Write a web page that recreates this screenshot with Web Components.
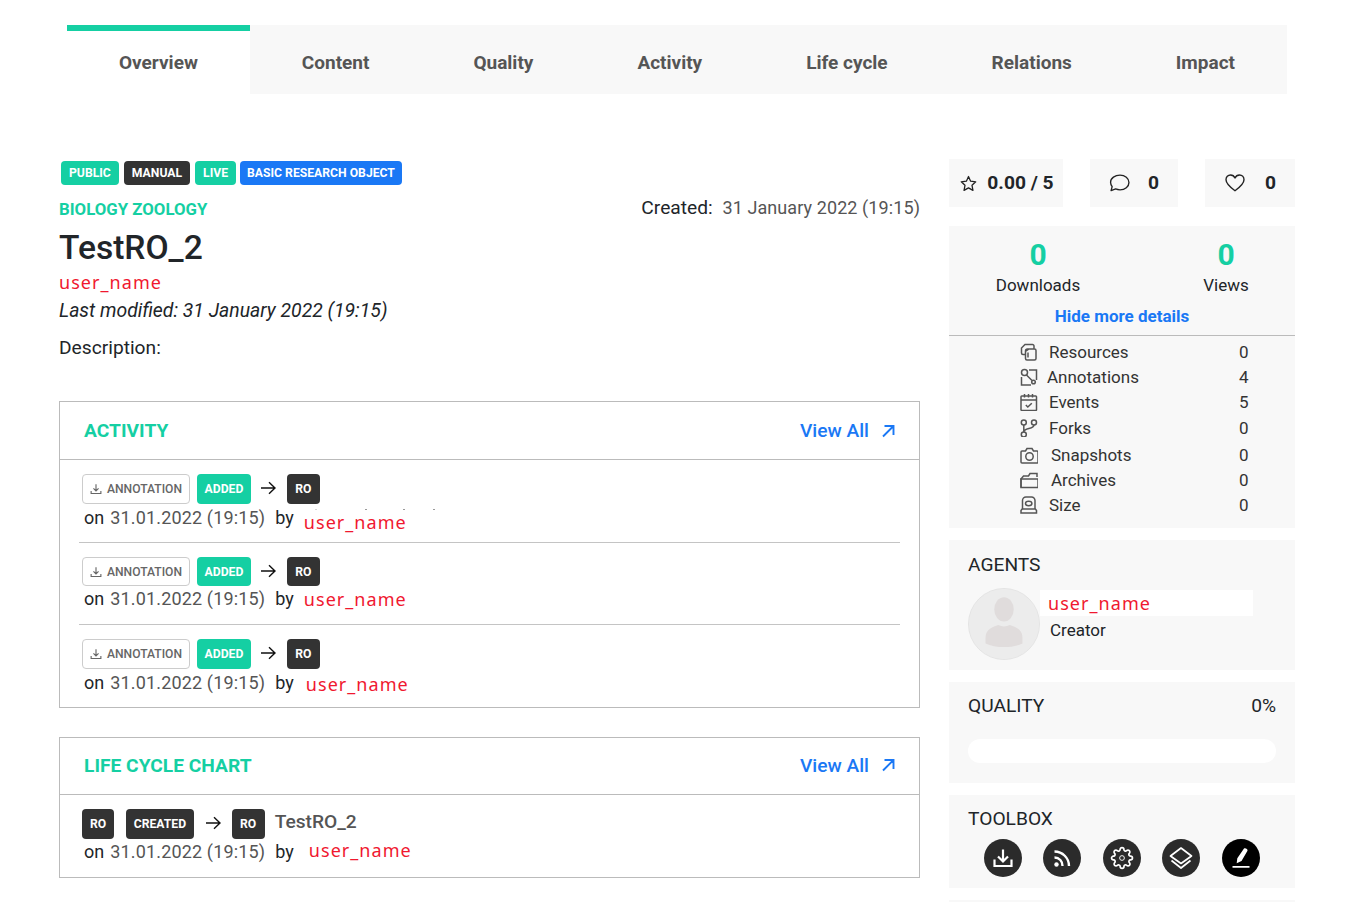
<!DOCTYPE html>
<html lang="en">
<head>
<meta charset="utf-8">
<title>TestRO_2</title>
<style>
  html, body { margin: 0; height: 902px; overflow: hidden; background: #fff; }
  body { font-family: Roboto, "Liberation Sans", sans-serif; color: #212529; }
  ro-page { height: 902px; }
</style>
</head>
<body>
<ro-page>
  <ro-tabs slot="tabs" items="Overview,Content,Quality,Activity,Life cycle,Relations,Impact"></ro-tabs>

  <ro-header slot="main"></ro-header>

  <ro-panel slot="main" heading="ACTIVITY" head-height="57">
    <activity-row name-shift="5" dots><ro-badge kind="outline"><svg slot="icon" width="12" height="12" viewBox="0 0 16 16" fill="none" stroke="#666" stroke-width="1.5"><path d="M8 1.500v9M4.600 7.200 8 10.600l3.400-3.400M1.500 10.500v3.500h13v-3.500"/></svg>ANNOTATION</ro-badge><ro-badge kind="green" style="padding:0 7.500px">ADDED</ro-badge><ro-arrow></ro-arrow><ro-badge kind="dark" style="min-width:33px">RO</ro-badge></activity-row>
    <activity-row divider name-shift="1" style="--chip-h:29px;--line-top:0px"><ro-badge kind="outline"><svg slot="icon" width="12" height="12" viewBox="0 0 16 16" fill="none" stroke="#666" stroke-width="1.5"><path d="M8 1.500v9M4.600 7.200 8 10.600l3.400-3.400M1.500 10.500v3.500h13v-3.500"/></svg>ANNOTATION</ro-badge><ro-badge kind="green" style="padding:0 7.500px">ADDED</ro-badge><ro-arrow></ro-arrow><ro-badge kind="dark" style="min-width:33px">RO</ro-badge></activity-row>
    <activity-row divider name-shift="2" name-left="2" style="height:83px"><ro-badge kind="outline"><svg slot="icon" width="12" height="12" viewBox="0 0 16 16" fill="none" stroke="#666" stroke-width="1.5"><path d="M8 1.500v9M4.600 7.200 8 10.600l3.400-3.400M1.500 10.500v3.500h13v-3.500"/></svg>ANNOTATION</ro-badge><ro-badge kind="green" style="padding:0 7.500px">ADDED</ro-badge><ro-arrow></ro-arrow><ro-badge kind="dark" style="min-width:33px">RO</ro-badge></activity-row>
  </ro-panel>

  <ro-panel slot="main" heading="LIFE CYCLE CHART" head-height="56" gap="29" style="--lift:2px">
    <activity-row name-shift="-1" name-left="5" style="--line-top:0px"><ro-badge kind="dark">RO</ro-badge><ro-badge kind="dark" style="margin-left:5px;padding:0 7.500px">CREATED</ro-badge><ro-arrow style="margin-left:4px"></ro-arrow><ro-badge kind="dark" style="min-width:33px">RO</ro-badge><ro-title>TestRO_2</ro-title></activity-row>
  </ro-panel>

  <stat-chips slot="side"></stat-chips>

  <side-card slot="side" top="19" height="302">
    <ro-counters></ro-counters>
    <detail-row label="Resources" value="0" icon="resources" style="margin-top:3px"></detail-row>
    <detail-row label="Annotations" value="4" left="-2" icon="annotations"></detail-row>
    <detail-row label="Events" value="5" icon="events"></detail-row>
    <detail-row label="Forks" value="0" icon="forks"></detail-row>
    <detail-row label="Snapshots" value="0" left="2" icon="snapshots" style="margin-top:2px"></detail-row>
    <detail-row label="Archives" value="0" left="2" icon="archives"></detail-row>
    <detail-row label="Size" value="0" icon="size"></detail-row>
  </side-card>

  <side-card slot="side" top="12" height="130" heading="AGENTS"><agent-item></agent-item></side-card>
  <side-card slot="side" top="12" height="101" heading="QUALITY" aside="0%" style="--head-top:12px;--body-top:1px"><quality-bar></quality-bar></side-card>
  <side-card slot="side" top="12" height="93" heading="TOOLBOX" style="--head-top:12px;--body-top:1px"><tool-box></tool-box></side-card>
  <side-card slot="side" top="12" height="2"></side-card>
</ro-page>

<script>
const GREEN = '#15cfa3';
const RED = '#f0182f';
const BLUE = '#1a78f5';

// shared small helper so every class sets up its shadow root the same way
class Base extends HTMLElement {
  constructor() {
    super();
    this.attachShadow({ mode: 'open' });
  }
}

class RoPage extends Base {
  connectedCallback() {
    this.shadowRoot.innerHTML = `
      <style>
        :host { display: block; }
        .tabs { margin: 25px 70px 0 67px; }
        .grid { display: grid; grid-template-columns: 861px 346px; column-gap: 29px; margin: 65px 0 0 59px; }
        .col { display: flex; flex-direction: column; min-width: 0; }
      </style>
      <div class="tabs"><slot name="tabs"></slot></div>
      <div class="grid">
        <div class="col"><slot name="main"></slot></div>
        <div class="col"><slot name="side"></slot></div>
      </div>`;
  }
}

class RoTabs extends Base {
  connectedCallback() {
    const items = this.getAttribute('items').split(',');
    this.shadowRoot.innerHTML = `
      <style>
        :host { display: flex; background: #f8f8f8; height: 69px; justify-content: space-between; }
        .tab { box-sizing: border-box; padding: 6px 52px 0; height: 69px; display: flex; align-items: center;
               font: 700 19px Roboto, sans-serif; color: #555; white-space: nowrap; }
        .tab.active { background: #fff; border-top: 6px solid ${GREEN}; padding-top: 0; }
      </style>
      ${items.map((t, i) => `<div class="tab ${i === 0 ? 'active' : ''}">${t}</div>`).join('')}`;
  }
}

class RoBadge extends Base {
  connectedCallback() {
    this.shadowRoot.innerHTML = `
      <style>
        :host { display: inline-flex; align-items: center; justify-content: center; box-sizing: border-box; height: var(--chip-h, 30px);
                padding: 0 8px; border-radius: 4px; font: 700 12.200px Roboto, sans-serif; color: #fff; white-space: nowrap; gap: 4px; }
        :host([kind=green]) { background: ${GREEN}; }
        :host([kind=dark]) { background: #333; }
        :host([kind=blue]) { background: ${BLUE}; }
        :host([kind=outline]) { background: #fff; border: 1px solid #ccc; color: #666; font-weight: 500; font-size: 12.100px; padding: 0 7px; gap: 5px; }
      </style>
      <slot name="icon"></slot><slot></slot>`;
  }
}

class UserName extends Base {
  connectedCallback() {
    this.shadowRoot.innerHTML = `
      <style>
        :host { display: inline-block; font: 400 18px/24px "Noto Sans", sans-serif; letter-spacing: 1.050px; color: ${RED}; white-space: nowrap; }
      </style>user_name`;
  }
}

class RoArrow extends Base {
  connectedCallback() {
    this.shadowRoot.innerHTML = `
      <style>:host { display: inline-flex; align-items: center; margin: -2px 4px 0 2px; }</style>
      <svg width="16" height="14" viewBox="0 0 16 14" fill="none" stroke="#111" stroke-width="1.4"><path d="M1 7h14M9 1.200 15 7l-6 5.800"/></svg>`;
  }
}

class RoTitle extends Base {
  connectedCallback() {
    this.shadowRoot.innerHTML = `
      <style>:host { display: inline-block; font: 500 19.200px/24px Roboto, sans-serif; color: #555; margin: -5px 0 0 3px; }</style>
      <slot></slot>`;
  }
}

class RoHeader extends Base {
  connectedCallback() {
    this.shadowRoot.innerHTML = `
      <style>
        :host { display: block; height: 242px; font-family: Roboto, sans-serif; }
        .badges { display: flex; gap: 5px; margin-left: 2px; height: 24px; margin-top: 2px; --chip-h: 24px; }
        .row { display: flex; justify-content: space-between; align-items: flex-start; margin-top: 13px; }
        .cat { font: 700 16.800px/23px Roboto, sans-serif; color: ${GREEN}; }
        .created { font-size: 19.200px; line-height: 22px; margin-top: -1px; }
        .created span { color: #555; font-size: 18px; margin-left: 5px; letter-spacing: .09px; }
        h1 { font: 500 33.600px/40px Roboto, sans-serif; margin: 7px 0 0; }
        user-name { display: block; margin-top: 2px; }
        .mod { font: italic 400 19.400px/24px Roboto, sans-serif; margin-top: 5px; }
        .desc { font: 400 19.200px/24px Roboto, sans-serif; margin-top: 13px; }
      </style>
      <div class="badges">
        <ro-badge kind="green">PUBLIC</ro-badge><ro-badge kind="dark">MANUAL</ro-badge><ro-badge kind="green">LIVE</ro-badge><ro-badge kind="blue" style="margin-left:-1px;padding:0 7px">BASIC RESEARCH OBJECT</ro-badge>
      </div>
      <div class="row">
        <div class="cat">BIOLOGY ZOOLOGY</div>
        <div class="created">Created: <span>31 January 2022 (19:15)</span></div>
      </div>
      <h1>TestRO_2</h1>
      <user-name></user-name>
      <div class="mod">Last modified: 31 January 2022 (19:15)</div>
      <div class="desc">Description:</div>`;
  }
}

class RoPanel extends Base {
  connectedCallback() {
    const gap = this.getAttribute('gap') || 0;
    const head = this.getAttribute('head-height');
    this.shadowRoot.innerHTML = `
      <style>
        :host { display: block; border: 1px solid #bbb; margin-top: ${gap}px; }
        .head { display: flex; justify-content: space-between; align-items: center; height: ${head}px; padding: 0 24px;
                border-bottom: 1px solid #bbb; }
        .title { font: 700 19.200px Roboto, sans-serif; color: ${GREEN}; margin-bottom: var(--lift, 0); }
        .link { display: flex; align-items: center; gap: 12px; font: 500 19.200px Roboto, sans-serif; color: ${BLUE}; margin-bottom: var(--lift, 0); }
      </style>
      <div class="head">
        <div class="title">${this.getAttribute('heading')}</div>
        <div class="link">View All
          <svg width="14" height="14" viewBox="0 0 14 14" fill="none" stroke="${BLUE}" stroke-width="1.900"><path d="M2 12.500 12 2.500M3.500 2h9v9"/></svg>
        </div>
      </div>
      <slot></slot>`;
  }
}

class ActivityRow extends Base {
  connectedCallback() {
    const shift = Number(this.getAttribute('name-shift') || 0);
    const left = Number(this.getAttribute('name-left') || 0);
    const dots = this.hasAttribute('dots')
      ? `<div class="dots"><i style="left:233px;opacity:.4"></i><i style="left:283px"></i><i style="left:321px"></i><i style="left:351px"></i></div>` : '';
    this.shadowRoot.innerHTML = `
      <style>
        :host { display: block; position: relative; box-sizing: border-box; height: 82px; padding: 14px 20px 0 22px; }
        :host([divider]) { padding-top: 15px; }
        :host([divider])::before { content: ""; position: absolute; left: 19px; right: 19px; top: 0; height: 1px; background: #c4c4c4; }
        .chips { display: flex; align-items: center; gap: 7px; height: var(--chip-h, 30px); }
        .line { display: flex; align-items: baseline; margin: var(--line-top, 1px) 0 0 2px; font: 400 18px/24px Roboto, sans-serif; }
        .date { color: #555; letter-spacing: .16px; margin-left: 6px; }
        .by { margin-left: 10px; }
        user-name { margin-left: ${10 + left}px; position: relative; top: ${shift}px; }
        .dots { position: relative; }
        .dots i { position: absolute; top: 5px; width: 2px; height: 1px; background: #9a9a9a; }
      </style>
      <div class="chips"><slot></slot></div>
      ${dots}
      <div class="line"><span>on</span><span class="date">31.01.2022 (19:15)</span><span class="by">by</span><user-name></user-name></div>`;
  }
}

class StatChips extends Base {
  connectedCallback() {
    const star = `<svg width="17" height="17" viewBox="0 0 16 16" fill="none" stroke="#222" stroke-width="1.200" stroke-linejoin="round"><path d="M8 1.400l2 4.400 4.800.6-3.500 3.300.9 4.800L8 12.100l-4.200 2.400.9-4.800L1.200 6.400l4.800-.6z"/></svg>`;
    const bubble = `<svg width="21" height="18" viewBox="0 0 20 17" fill="none" stroke="#222" stroke-width="1.300" stroke-linejoin="round"><path d="M10.500 1C5.800 1 1.500 3.700 1.500 7.800c0 1.900 1 3.500 1.500 4.200L2 15.800l4.300-1.600c1.300.5 2.700.8 4.200.8 4.700 0 8.500-3.100 8.500-7S15.200 1 10.500 1z"/></svg>`;
    const heart = `<svg width="20" height="18" viewBox="0 0 20 18" fill="none" stroke="#222" stroke-width="1.400" stroke-linejoin="round"><path d="M10 16.800C4 12.400 1 9.200 1 5.800 1 3 3 1 5.500 1 7.500 1 9.200 2.200 10 4c.8-1.800 2.500-3 4.500-3C17 1 19 3 19 5.800c0 3.400-3 6.600-9 11z"/></svg>`;
    this.shadowRoot.innerHTML = `
      <style>
        :host { display: flex; justify-content: space-between; height: 48px; margin-top: 0; }
        .chip { display: flex; align-items: center; justify-content: center; background: #f8f8f8; height: 48px;
                font: 700 19.200px Roboto, sans-serif; color: #212529; }
        .chip span { margin-top: -2px; }
      </style>
      <div class="chip" style="width:114px;gap:10px;padding-left:2px;box-sizing:border-box">${star}<span>0.00 / 5</span></div>
      <div class="chip" style="width:88px;gap:18px">${bubble}<span>0</span></div>
      <div class="chip" style="width:90px;gap:20px;padding-left:1px;box-sizing:border-box">${heart}<span>0</span></div>`;
  }
}

class SideCard extends Base {
  connectedCallback() {
    const heading = this.getAttribute('heading');
    const aside = this.getAttribute('aside');
    this.shadowRoot.innerHTML = `
      <style>
        :host { display: block; box-sizing: border-box; background: #f8f8f8; margin-top: ${this.getAttribute('top')}px; height: ${this.getAttribute('height')}px; flex: none; }
        .h { display: flex; justify-content: space-between; padding: var(--head-top, 13px) 19px var(--body-top, 0); font: 400 19.200px/24px Roboto, sans-serif; color: #212529; }
      </style>
      ${heading ? `<div class="h"><span>${heading}</span><span>${aside || ''}</span></div>` : ''}
      <slot></slot>`;
  }
}

class RoCounters extends Base {
  connectedCallback() {
    this.shadowRoot.innerHTML = `
      <style>
        :host { display: block; box-sizing: border-box; height: 110px; border-bottom: 1px solid #bbb; text-align: center; font: 400 17px/24px Roboto, sans-serif; }
        .two { display: grid; grid-template-columns: 178px 178px; column-gap: 10px; padding-top: 11px; }
        .num { font: 700 30px/36px Roboto, sans-serif; color: ${GREEN}; }
        .more { font: 700 17px/24px Roboto, sans-serif; color: ${BLUE}; margin-top: 7px; width: 346px; }
      </style>
      <div class="two">
        <div><div class="num">0</div><div>Downloads</div></div>
        <div><div class="num">0</div><div>Views</div></div>
      </div>
      <div class="more">Hide more details</div>`;
  }
}

const DETAIL_ICONS = {
  resources: `<path d="M5.500 8A2 2 0 0 1 7.500 6h7A1.500 1.500 0 0 1 16 7.500v8A1.500 1.500 0 0 1 14.500 17h-7.500A1.500 1.500 0 0 1 5.500 15.500zM5.500 11.500H3A1.500 1.500 0 0 1 1.500 10V5L5 1.500h7.500A1.500 1.500 0 0 1 14 3v3M5.500 8.500 9 6M8 14.500V9.500"/>`,
  annotations: `<circle cx="4.500" cy="4.500" r="3"/><circle cx="13.500" cy="14" r="1.800"/><path d="M9 2h7.500v10M1.500 9V17H11M6.500 7l5.500 5.500"/>`,
  events: `<rect x="1" y="3" width="15.500" height="14.500" rx=".8"/><path d="M1 7h15.500M4.500 1v3.500M8.500 1v3.500M12.500 1v3.500M5.800 12l2 2 4-3.800" stroke-width="1.500"/>`,
  forks: `<circle cx="3.800" cy="3.500" r="2.500"/><circle cx="14" cy="3.500" r="2.500"/><circle cx="3.800" cy="15.500" r="2.500"/><path d="M3.800 6v7M14 6c0 4.500-10.200 2.500-10.200 7"/>`,
  snapshots: `<path d="M1 6A1 1 0 0 1 2 5h3.500L7 2.500h5L13.500 5H17a1 1 0 0 1 1 1v10a1 1 0 0 1-1 1H2a1 1 0 0 1-1-1z"/><circle cx="9.500" cy="10.500" r="3.700"/>`,
  archives: `<path d="M1 16.500V8L3.500 5h5l1.500-2.500h7V6"/><path d="M1 8h17v8.500H1z"/>`,
  size: `<path d="M2.500 4.500A3.500 3.500 0 0 1 6 1h5.500A3.500 3.500 0 0 1 15 4.500v8l1.500 2v2.500H1v-2.500l1.500-2zM2.500 13h12.500"/><ellipse cx="8.700" cy="7.500" rx="3.200" ry="2.200"/>`
};

class DetailRow extends Base {
  connectedCallback() {
    const left = Number(this.getAttribute('left') || 0);
    const icon = DETAIL_ICONS[this.getAttribute('icon')];
    this.shadowRoot.innerHTML = `
      <style>
        :host { display: flex; align-items: center; height: 25.300px; padding-left: 71px; font: 400 17px/24px Roboto, sans-serif; color: #333; }
        svg { flex: none; width: 18px; height: 18px; margin-right: ${11 + left}px; }
        .label { width: ${190 - left}px; }
      </style>
      <svg viewBox="0 0 18 18" fill="none" stroke="#555" stroke-width="1.500">${icon}</svg>
      <span class="label">${this.getAttribute('label')}</span><span>${this.getAttribute('value')}</span>`;
  }
}

class AgentItem extends Base {
  connectedCallback() {
    this.shadowRoot.innerHTML = `
      <style>
        :host { display: flex; padding: 11px 0 0 19px; }
        .avatar { width: 72px; height: 72px; flex: none; border-radius: 50%; background: #ececec; border: 1px solid #e4e4e4; box-sizing: border-box; }
        .info { width: 213px; }
        .name { background: #fff; height: 26px; padding: 0 0 1px 8px; box-sizing: border-box; display: flex; align-items: center; margin-top: 2px; }
        .role { font: 400 17px/24px Roboto, sans-serif; margin: 2px 0 0 10px; }
      </style>
      <svg class="avatar" viewBox="0 0 72 72"><circle cx="36" cy="36" r="36" fill="#ececec"/><ellipse cx="36" cy="21" rx="10" ry="12.500" fill="#e0dcdc"/><path d="M17 50c0-9 8-11 13-13 4 2 8 2 12 0 5 2 13 4 13 13v6c-10 5-28 5-38 0z" fill="#e0dcdc"/></svg>
      <div class="info">
        <div class="name"><user-name></user-name></div>
        <div class="role">Creator</div>
      </div>`;
  }
}

class QualityBar extends Base {
  connectedCallback() {
    this.shadowRoot.innerHTML = `
      <style>
        :host { display: block; height: 24px; margin: 20px 19px 0; background: #fff; border-radius: 12px; }
      </style>`;
  }
}

class ToolBox extends Base {
  connectedCallback() {
    const icons = [
      `<path d="M12 3.500v12M7 10.500l5 5 5-5M3.500 13.500v6.500h17v-6.500" stroke-width="2.200"/>`,
      `<circle cx="6.500" cy="18.500" r="2.200" fill="#fff" stroke="none"/><path d="M4.500 11.500a8 8 0 0 1 8 8.500M4.500 5.500a14.500 14.500 0 0 1 14.500 14.500" stroke-width="2.400"/>`,
      `<g transform="translate(.6 .6) scale(.95)"><circle cx="12" cy="12" r="2.500"/><path stroke-width="1.800" d="M19.400 15a1.650 1.650 0 0 0 .33 1.820l.06.06a2 2 0 0 1 0 2.830 2 2 0 0 1-2.830 0l-.06-.06a1.650 1.650 0 0 0-1.820-.33 1.650 1.650 0 0 0-1 1.510V21a2 2 0 0 1-2 2 2 2 0 0 1-2-2v-.09A1.650 1.650 0 0 0 9 19.400a1.650 1.650 0 0 0-1.820.33l-.06.06a2 2 0 0 1-2.830 0 2 2 0 0 1 0-2.830l.06-.06a1.650 1.650 0 0 0 .33-1.820 1.650 1.650 0 0 0-1.510-1H3a2 2 0 0 1-2-2 2 2 0 0 1 2-2h.09A1.650 1.650 0 0 0 4.600 9a1.650 1.650 0 0 0-.33-1.820l-.06-.06a2 2 0 0 1 0-2.830 2 2 0 0 1 2.830 0l.06.06a1.650 1.650 0 0 0 1.820.33H9a1.650 1.650 0 0 0 1-1.510V3a2 2 0 0 1 2-2 2 2 0 0 1 2 2v.09a1.650 1.650 0 0 0 1 1.510 1.650 1.650 0 0 0 1.820-.33l.06-.06a2 2 0 0 1 2.830 0 2 2 0 0 1 0 2.830l-.06.06a1.650 1.650 0 0 0-.33 1.820V9a1.650 1.650 0 0 0 1.510 1H21a2 2 0 0 1 2 2 2 2 0 0 1-2 2h-.09a1.650 1.650 0 0 0-1.510 1z"/></g>`,
      `<path stroke-width="1.700" stroke-linejoin="round" d="M12 2 22.500 10 12 17.500 1.500 10zM2.500 14.500 12 22l9.500-7.500"/>`,
      `<path fill="#fff" stroke="none" d="M15 2.500c1.200-1 4 .5 3.500 2.300L12.500 15l-4.800 2.200.6-5zM3.500 20h17v1.800h-17z"/>`
    ];
    this.shadowRoot.innerHTML = `
      <style>
        :host { display: flex; gap: 21.450px; padding: 7px 0 0 35px; }
        .b { width: 38px; height: 38px; border-radius: 50%; background: #2b2b2b; display: flex; align-items: center; justify-content: center; }
        .b:last-child { background: #000; }
        svg { width: 24px; height: 24px; fill: none; stroke: #fff; }
      </style>
      ${icons.map(p => `<div class="b"><svg viewBox="0 0 24 24">${p}</svg></div>`).join('')}`;
  }
}

customElements.define('ro-page', RoPage);
customElements.define('ro-tabs', RoTabs);
customElements.define('ro-badge', RoBadge);
customElements.define('user-name', UserName);
customElements.define('ro-arrow', RoArrow);
customElements.define('ro-title', RoTitle);
customElements.define('ro-header', RoHeader);
customElements.define('ro-panel', RoPanel);
customElements.define('activity-row', ActivityRow);
customElements.define('stat-chips', StatChips);
customElements.define('side-card', SideCard);
customElements.define('ro-counters', RoCounters);
customElements.define('detail-row', DetailRow);
customElements.define('agent-item', AgentItem);
customElements.define('quality-bar', QualityBar);
customElements.define('tool-box', ToolBox);
</script>
</body>
</html>
